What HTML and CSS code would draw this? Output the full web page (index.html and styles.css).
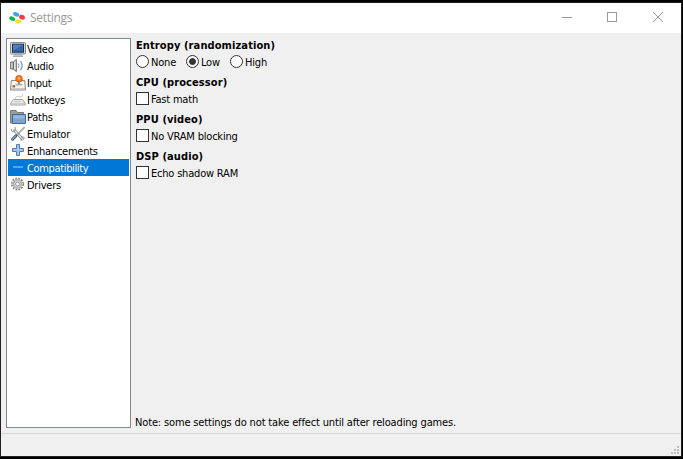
FILE: index.html
```html
<!DOCTYPE html>
<html lang="en">
<head>
<meta charset="utf-8">
<title>Settings</title>
<link rel="stylesheet" href="styles.css">
</head>
<body>
<div class="window">
    <div class="titlebar">
        <svg class="logo" width="16" height="12" viewBox="0 0 16 12">
            <ellipse cx="7.2" cy="2.4" rx="3.2" ry="2.1" transform="rotate(20 7.2 2.4)" fill="#3fa0f4"/>
            <ellipse cx="13" cy="5.2" rx="3" ry="2.3" transform="rotate(25 13 5.2)" fill="#f83848"/>
            <ellipse cx="3.2" cy="6.6" rx="3.1" ry="2.1" transform="rotate(20 3.2 6.6)" fill="#10b848"/>
            <ellipse cx="9.2" cy="9.6" rx="3.2" ry="2" fill="#fae51e"/>
        </svg>
        <span class="title">Settings</span>
        <svg class="controls" width="102" height="12" viewBox="0 0 102 12" fill="none" stroke="#999" shape-rendering="crispEdges">
            <path d="M0 5.5h10"/>
            <path d="M45.5 .5h9v9h-9z"/>
            <path d="M91 0l10 10M101 0l-10 10" shape-rendering="auto"/>
        </svg>
    </div>
    <div class="content">
        <ul class="list">
            <li>
                <svg width="16" height="16" viewBox="0 0 16 16">
                    <rect x=".5" y="1.5" width="15" height="11.5" rx="1" fill="#d8d8d3" stroke="#888"/>
                    <rect x="2.5" y="3.2" width="11" height="8" fill="#3465a4" stroke="#17345f"/>
                    <path d="M3 3.7h10L3 9.7z" fill="#557fb4"/>
                    <path d="M5 13.4h6l2 2.1H3z" fill="#c8c8c4" stroke="#999" stroke-width=".7"/>
                </svg>
                <span>Video</span>
            </li>
            <li>
                <svg width="16" height="16" viewBox="0 0 16 16" fill="none">
                    <path d="M.7 4h2.6v7H.7zM3.3 4l3-2.5v12l-3-2.5z" fill="#e4e4e0" stroke="#666"/>
                    <path d="M8.2 5.5q1.5 2.2 0 4.4" stroke="#7795bb"/>
                    <path d="M10.5 3q3.2 4.6 0 9.2" stroke="#6f90ba" stroke-width="1.2"/>
                </svg>
                <span>Audio</span>
            </li>
            <li>
                <svg width="16" height="16" viewBox="0 0 16 16">
                    <path d="M1.3 5.5h13.4l.8 9.5H.5z" fill="#f5f5f2" stroke="#888"/>
                    <path d="M1 13.8h14" stroke="#bbb"/>
                    <path d="M5.5 8.8h7v1.8h-7z" fill="#bbb"/>
                    <path d="M9 5v4.5" stroke="#777" stroke-width="1.6"/>
                    <circle cx="9" cy="3.7" r="3.3" fill="#f07918" stroke="#c65305" stroke-width=".8"/>
                    <circle cx="9" cy="3.2" r="1.3" fill="#ffb778"/>
                    <circle cx="3.8" cy="11.3" r="1.4" fill="#ce5c00"/>
                </svg>
                <span>Input</span>
            </li>
            <li>
                <svg width="16" height="16" viewBox="0 0 16 16" fill="none">
                    <path d="M12.5 1.5v2.2q0 1-1.5 1H7q-1.5 0-1.5 1.5V8" stroke="#ccc"/>
                    <path d="M3.5 7.5h9l2.8 3.8v1.7H.7v-1.7z" fill="#efefed" stroke="#a5a5a5"/>
                    <path d="M1 11.3h14M4 9.3h8" stroke="#c5c5c5"/>
                </svg>
                <span>Hotkeys</span>
            </li>
            <li>
                <svg width="16" height="16" viewBox="0 0 16 16">
                    <path d="M.5 14V2q0-.5.5-.5h5l1.5 2h6v10.5z" fill="#9b9b98" stroke="#777"/>
                    <path d="M2.5 5.5h13v9h-13z" fill="#7da4cf" stroke="#3c6ca6"/>
                    <path d="M3.5 6.5h11v3h-11z" fill="#98b8da"/>
                </svg>
                <span>Paths</span>
            </li>
            <li>
                <svg width="16" height="16" viewBox="0 0 16 16" fill="none" stroke-linecap="round">
                    <path d="M4.5 4.5l8 8.5" stroke="#888" stroke-width="2.6"/>
                    <path d="M4.5 4.5l8 8.5" stroke="#e6e6e3" stroke-width="1.2"/>
                    <path d="M1 3q0 3.2 3.3 2.8Q6.5 4 5 1.2M11 14.6q-1-3 2-3.8l2 1.5" stroke="#999"/>
                    <path d="M14.3 1.5L8 8" stroke="#888" stroke-width="1.5"/>
                    <path d="M14.3 1.5L9 7" stroke="#ddd" stroke-width=".6"/>
                    <path d="M6 9.8L2.6 13.2" stroke="#35547f" stroke-width="3"/>
                    <path d="M5.8 9.8L2.6 13" stroke="#8cabd0" stroke-width="1.2"/>
                </svg>
                <span>Emulator</span>
            </li>
            <li>
                <svg width="16" height="16" viewBox="0 0 16 16">
                    <path d="M6.5 1.5h3v4h4v3h-4v4h-3v-4h-4v-3h4z" fill="#a5c4e6" stroke="#4a7db9"/>
                </svg>
                <span>Enhancements</span>
            </li>
            <li class="selected">
                <svg width="16" height="16" viewBox="0 0 16 16">
                    <path d="M3 6h10v2H3z" fill="#5199dc"/>
                    <path d="M3 6.5h10v1H3z" fill="#72aade"/>
                </svg>
                <span>Compatibility</span>
            </li>
            <li>
                <svg width="16" height="16" viewBox="0 0 16 16" fill="none">
                    <circle cx="7.5" cy="7" r="5.7" stroke="#888" stroke-width="1.8" stroke-dasharray="1.8 1.185"/>
                    <circle cx="7.5" cy="7" r="4" fill="#ddd" stroke="#b5b5b2" stroke-width="2"/>
                    <circle cx="7.5" cy="7" r="1.9" fill="#fff" stroke="#888" stroke-width=".9"/>
                </svg>
                <span>Drivers</span>
            </li>
        </ul>
        <div class="panel">
            <h2>Entropy (randomization)</h2>
            <div class="options">
                <label class="none"><i class="radio"></i><span>None</span></label>
                <label class="low"><i class="radio checked"></i><span>Low</span></label>
                <label><i class="radio"></i><span>High</span></label>
            </div>
            <h2>CPU (processor)</h2>
            <div class="options">
                <label><i class="check"></i><span>Fast math</span></label>
            </div>
            <h2>PPU (video)</h2>
            <div class="options">
                <label><i class="check"></i><span>No VRAM blocking</span></label>
            </div>
            <h2>DSP (audio)</h2>
            <div class="options">
                <label><i class="check"></i><span>Echo shadow RAM</span></label>
            </div>
            <p class="note">Note: some settings do not take effect until after reloading games.</p>
        </div>
    </div>
    <div class="statusbar">
        <svg width="8" height="8" viewBox="0 0 8 8" fill="#bfbfbf" shape-rendering="crispEdges">
            <path d="M6 0h2v2H6zM3 3h2v2H3zM6 3h2v2H6zM0 6h2v2H0zM3 6h2v2H3zM6 6h2v2H6z"/>
        </svg>
    </div>
</div>
</body>
</html>
```
FILE: styles.css
```css
* {
    box-sizing: border-box;
}
html, body {
    margin: 0;
    padding: 0;
    height: 459px;
    overflow: hidden;
}
body {
    padding: 2px 1px 2px 0;
    background: #000;
    color: #000;
    font: 11px/17px "DejaVu Sans Condensed", "DejaVu Sans", sans-serif;
    white-space: nowrap;
}
.window {
    display: flex;
    flex-direction: column;
    height: 455px;
    border: 1px solid #231f20;
    background: #f0f0f0;
}
.titlebar {
    display: flex;
    align-items: center;
    height: 30px;
    padding: 0 17px 0 8px;
    background: #fff;
}
.logo {
    margin-top: -1px;
}
.title {
    margin-left: 5px;
    color: #999;
    font: 12px/30px "Open Sans", sans-serif;
    letter-spacing: -.3px;
}
.controls {
    margin-left: auto;
}
.content {
    display: flex;
    flex: 1;
    padding: 5px;
}
.list {
    width: 125px;
    height: 390px;
    margin: 0;
    padding: 1px;
    border: 1px solid #828790;
    background: #fff;
    list-style: none;
}
.list li {
    display: flex;
    align-items: center;
    height: 17px;
    padding-left: 2px;
    letter-spacing: -.25px;
}
.list span {
    margin: 1px 0 0 1px;
}
.list .selected {
    background: #0078d7;
    color: #fff;
    letter-spacing: -.35px;
}
.panel {
    display: flex;
    flex-direction: column;
    height: 390px;
    padding-left: 5px;
}
h2 {
    height: 15px;
    margin: 0;
    font-size: 11px;
    line-height: 15px;
    letter-spacing: .1px;
}
.options {
    display: flex;
    height: 17px;
    margin: 0 0 5px;
}
label {
    display: flex;
    align-items: center;
    letter-spacing: -.2px;
}
label span {
    margin: 1px 0 0 2px;
}
.none {
    width: 50px;
}
.low {
    width: 44px;
}
.radio, .check {
    width: 13px;
    height: 13px;
    border: 1px solid #333;
    background: #fff;
}
.radio {
    border-radius: 50%;
}
.checked {
    padding: 2px;
    background: #333 content-box;
    box-shadow: inset 0 0 0 2px #fff;
}
.note {
    margin: auto 0 -3px -1px;
    letter-spacing: -.15px;
}
.statusbar {
    display: flex;
    align-items: flex-end;
    justify-content: flex-end;
    height: 23px;
    padding: 0 2px 2px 0;
    border-top: 1px solid #d7d7d7;
}
```
